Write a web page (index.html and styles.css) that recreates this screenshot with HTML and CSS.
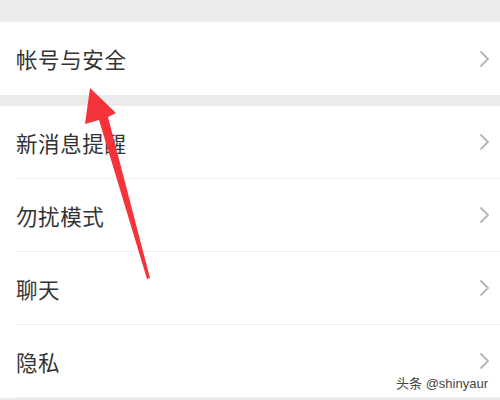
FILE: index.html
```html
<!DOCTYPE html>
<html lang="zh">
<head>
<meta charset="utf-8">
<link rel="stylesheet" href="styles.css">
</head>
<body>
<div class="page">
  <div class="top-gap"></div>
  <div class="group">
    <div class="row"><span class="label">帐号与安全</span><span class="chev"><svg width="11" height="18" viewBox="0 0 11 18"><path d="M1.5 1.5 L9 9 L1.5 16.5" fill="none" stroke="#b5b5b5" stroke-width="1.8"/></svg></span></div>
  </div>
  <div class="gap"></div>
  <div class="group">
    <div class="row"><span class="label">新消息提醒</span><span class="chev"><svg width="11" height="18" viewBox="0 0 11 18"><path d="M1.5 1.5 L9 9 L1.5 16.5" fill="none" stroke="#b5b5b5" stroke-width="1.8"/></svg></span></div>
    <div class="row"><span class="label">勿扰模式</span><span class="chev"><svg width="11" height="18" viewBox="0 0 11 18"><path d="M1.5 1.5 L9 9 L1.5 16.5" fill="none" stroke="#b5b5b5" stroke-width="1.8"/></svg></span></div>
    <div class="row"><span class="label">聊天</span><span class="chev"><svg width="11" height="18" viewBox="0 0 11 18"><path d="M1.5 1.5 L9 9 L1.5 16.5" fill="none" stroke="#b5b5b5" stroke-width="1.8"/></svg></span></div>
    <div class="row"><span class="label">隐私</span><span class="chev"><svg width="11" height="18" viewBox="0 0 11 18"><path d="M1.5 1.5 L9 9 L1.5 16.5" fill="none" stroke="#b5b5b5" stroke-width="1.8"/></svg></span></div>
  </div>
  <svg class="arrow" width="500" height="400" viewBox="0 0 500 400">
    <path d="M90 88 L116 113 L108 117 L150 278 L147 279 L99 120 L85 124 Z" fill="#f5333b"/>
  </svg>
  <div class="watermark">头条 @shinyaur</div>
</div>
</body>
</html>
```
FILE: styles.css
```css
html, body {
  margin: 0;
  padding: 0;
  background: #ebebeb;
}
.page {
  position: relative;
  width: 500px;
  height: 400px;
  overflow: hidden;
  font-family: "Noto Sans CJK SC", "Noto Sans", sans-serif;
}
.top-gap {
  height: 22px;
}
.gap {
  height: 11px;
}
.group {
  background: #fff;
  padding-left: 16px;
}
.row {
  display: flex;
  align-items: center;
  justify-content: space-between;
  padding-right: 10px;
  border-bottom: 1px solid #efefef;
  box-sizing: border-box;
  height: 73px;
}
.row:last-child {
  border-bottom: none;
}
.group + .gap + .group .row:last-child {
  border-bottom: 1px solid #efefef;
}
.label {
  font-size: 21.5px;
  color: #333;
  letter-spacing: 0.6px;
}
.chev {
  display: flex;
  align-items: center;
}
.arrow {
  position: absolute;
  left: 0;
  top: 0;
}
.watermark {
  position: absolute;
  right: 12px;
  top: 373px;
  font-size: 13px;
  color: #444;
  font-family: "Liberation Sans", "Noto Sans CJK SC", sans-serif;
  text-shadow: 0 0 2px #fff;
}
```
